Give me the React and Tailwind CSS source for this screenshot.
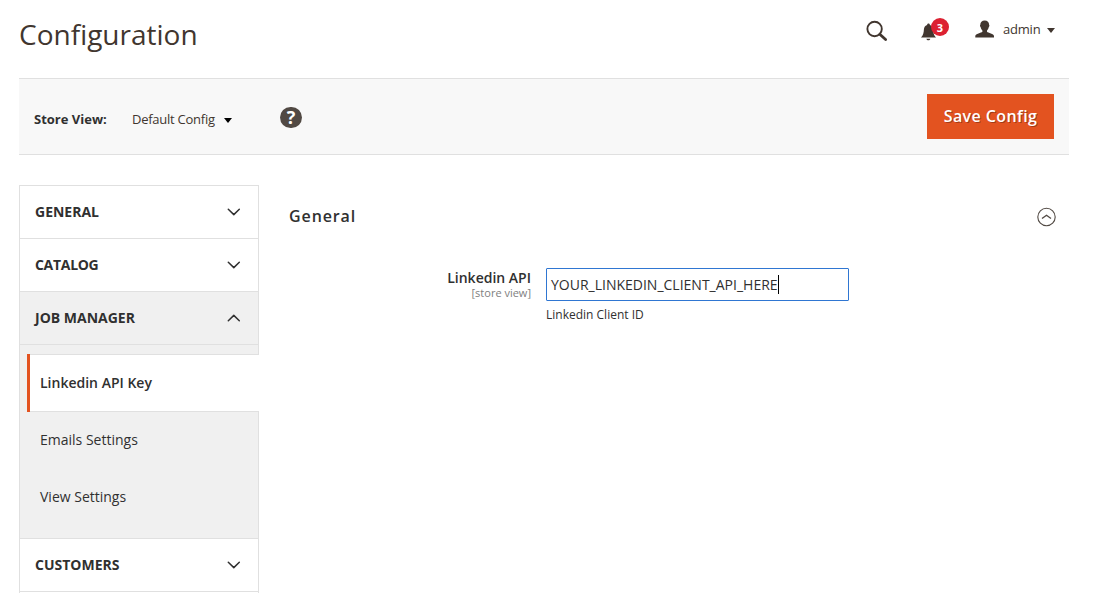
function SearchIcon() {
  return (
    <svg width="22" height="22" viewBox="0 0 22 22" fill="none" stroke="#41362f">
      <circle cx="8.6" cy="9" r="7.2" strokeWidth="1.9" />
      <path d="M13.8 14.2 L19.6 19.6" strokeWidth="2.8" strokeLinecap="round" />
    </svg>
  );
}

function BellIcon() {
  return (
    <svg width="16" height="18" viewBox="0 0 16 18" fill="#41362f">
      <path d="M7.5 0.6 C8.4 0.6 8.8 1.2 8.9 2 C11.2 2.7 12 4.6 12.1 6.6 C12.3 10 12.7 12 15 14.6 H0 C2.300 12 2.700 10 2.900 6.600 C3 4.600 3.800 2.700 6.100 2 C6.200 1.200 6.600 0.600 7.500 0.600 Z" />
      <path d="M5.400 15.700 H9.300 C9 16.700 8.300 17.200 7.350 17.200 C6.400 17.200 5.700 16.700 5.400 15.700 Z" />
    </svg>
  );
}

function UserIcon() {
  return (
    <svg width="20" height="18" viewBox="0 0 20 18" fill="#41362f">
      <path d="M9.700 0.500 C12.500 0.500 14.100 2.200 14.100 4.800 C14.600 5.200 14.500 6.500 13.800 7 C13.500 8.600 12.900 9.700 12 10.400 V11.800 C13 13 19 13.600 19 16 V17.600 H0.300 V16 C0.300 13.600 6.400 13 7.400 11.800 V10.400 C6.500 9.700 5.900 8.600 5.600 7 C4.900 6.500 4.800 5.200 5.300 4.800 C5.300 2.200 6.900 0.500 9.700 0.500 Z" />
    </svg>
  );
}

function Caret({ color }) {
  return (
    <svg width="8" height="5" viewBox="0 0 8 5" fill={color}>
      <path d="M0 0 H8 L4 5 Z" />
    </svg>
  );
}

function Chevron({ up }) {
  return (
    <svg width="14" height="8" viewBox="0 0 14 8" fill="none" stroke="#303030" strokeWidth="1.5">
      <path d={up ? "M1.300 6.800 L6.800 1.400 L12.300 6.800" : "M1.300 1.200 L6.800 6.600 L12.300 1.200"} strokeLinecap="round" strokeLinejoin="round" />
    </svg>
  );
}

function Section({ label, open, tight }) {
  return (
    <div
      className={
        "flex h-[53px] items-center justify-between border-b border-[#e0e0e0] pr-[17px] pl-[15px] text-sm font-bold text-[#303030] " +
        (open ? "bg-[#f0f0f0]" : "bg-white")
      }
    >
      <span className={tight ? "tracking-[-0.3px]" : ""}>{label}</span>
      <Chevron up={open} />
    </div>
  );
}

function Header() {
  return (
    <header className="flex h-[78px] items-start justify-between pr-[14px]">
      <h1 className="mt-[15px] text-[28px] leading-[38px] font-normal text-[#41362f]">Configuration</h1>
      <div className="flex items-start pt-[18px]">
        <div className="mt-[2px] mr-[33px]">
          <SearchIcon />
        </div>
        <div className="relative mt-[5px] mr-[38px]">
          <BellIcon />
          <span className="absolute -top-[5px] left-[10px] flex h-[18px] w-[18px] items-center justify-center rounded-full bg-[#dc2132] text-[11px] leading-none font-bold text-white">
            3
          </span>
        </div>
        <div className="mt-[2px] flex items-start">
          <UserIcon />
          <span className="ml-[8px] w-[37px] text-[13px] leading-[18px] tracking-[-0.2px] text-[#41362f]">admin</span>
          <span className="mt-[8px] ml-[7px] flex">
            <Caret color="#41362f" />
          </span>
        </div>
      </div>
    </header>
  );
}

function Toolbar() {
  return (
    <div className="flex h-[77px] items-center border-y border-[#e0e0e0] bg-[#f8f8f8] pr-[15px] pl-[15px]">
      <span className="mt-[6px] w-[98px] text-[13px] font-bold text-[#303030]">Store View:</span>
      <span className="mt-[6px] w-[83px] text-[13px] tracking-[-0.25px] whitespace-nowrap text-[#41362f]">Default Config</span>
      <span className="mt-[7px] ml-[9px]">
        <Caret color="#000000" />
      </span>
      <span className="mt-[1px] ml-[48px] flex h-[21px] w-[22px] items-center justify-center rounded-full bg-[#514943] text-[18px] leading-none font-bold text-white">
        ?
      </span>
      <button className="ml-auto h-[45px] w-[127px] bg-[#e35320] pb-[2px] text-base font-semibold tracking-[0.4px] text-white [text-shadow:1px_1px_0_rgba(0,0,0,0.3)]">
        Save Config
      </button>
    </div>
  );
}

function Sidebar() {
  return (
    <nav className="h-[408px] w-[240px] shrink-0 overflow-hidden border-t border-[#e0e0e0]">
      <div className="border-x border-[#e0e0e0]">
        <Section label="GENERAL" />
        <Section label="CATALOG" tight />
        <Section label="JOB MANAGER" open />
      </div>
      <div className="flex h-[194px] flex-col border-b border-l border-[#e0e0e0] bg-[#f0f0f0] text-sm text-[#303030]">
        <div className="h-[9px] border-r border-[#e0e0e0]" />
        <div className="ml-[7px] flex h-[58px] items-center border-l-[3px] border-[#e35320]">
          <div className="flex h-full w-full items-center border-y border-[#e0e0e0] bg-white pl-[10px] font-semibold">
            Linkedin API Key
          </div>
        </div>
        <div className="grow border-r border-[#e0e0e0] pl-[20px]">
          <div className="flex h-[56px] items-center">Emails Settings</div>
          <div className="flex h-[57px] items-center">View Settings</div>
        </div>
      </div>
      <div className="h-[54px] border-x border-[#e0e0e0]">
        <Section label="CUSTOMERS" />
      </div>
    </nav>
  );
}

function Content() {
  return (
    <main className="grow pr-[12px] pl-[30px]">
      <div className="flex items-center justify-between pt-[18px]">
        <h2 className="text-base leading-[26px] font-semibold tracking-[0.9px] text-[#303030]">General</h2>
        <svg className="mt-[2px]" width="20" height="20" viewBox="0 0 20 20" fill="none" stroke="#514943" strokeWidth="1.1">
          <circle cx="9.500" cy="10" r="8.700" />
          <path d="M5 11.600 L9.500 8.200 L14 11.600" strokeWidth="1.300" />
        </svg>
      </div>
      <div className="mt-[39px] flex">
        <div className="w-[242px] text-right">
          <div className="text-sm leading-[20px] font-semibold text-[#303030]">Linkedin API</div>
          <div className="-mt-px text-[11px] leading-[11px] text-[#808080]">[store view]</div>
        </div>
        <div className="ml-[15px]">
          <div className="flex h-[33px] w-[303px] items-center rounded-[1px] border border-[#2f76d2] bg-white pl-[4px] text-sm text-[#303030]">
            <span>YOUR_LINKEDIN_CLIENT_API_HERE</span>
            <span className="h-[19px] w-px bg-black" />
          </div>
          <p className="mt-[5px] text-xs leading-[17px] text-[#303030]">Linkedin Client ID</p>
        </div>
      </div>
    </main>
  );
}

export default function App() {
  return (
    <div className="h-[593px] w-[1099px] overflow-hidden bg-white pl-[19px] font-['Open_Sans',sans-serif]">
      <div className="w-[1050px]">
        <Header />
        <Toolbar />
        <div className="mt-[30px] flex">
          <Sidebar />
          <Content />
        </div>
      </div>
    </div>
  );
}
